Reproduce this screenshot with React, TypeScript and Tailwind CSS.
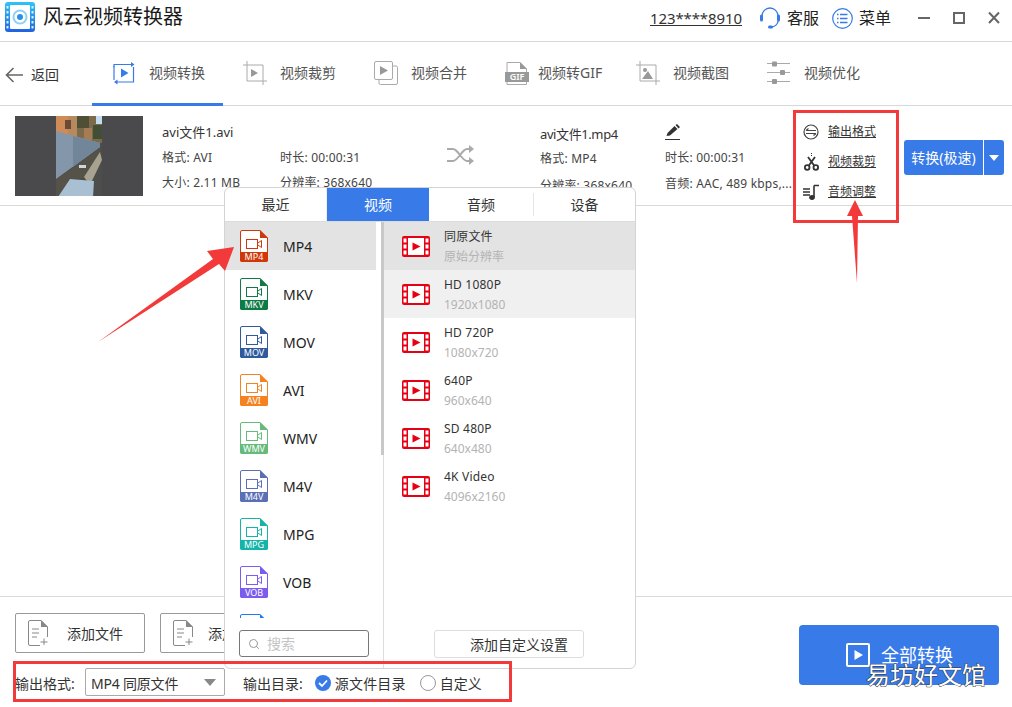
import type { ReactNode } from 'react';
import { Search } from 'lucide-react';

const BLUE = '#377ae8';

const formats = [
  { name: 'MP4', color: '#d0380a' },
  { name: 'MKV', color: '#0e7a45' },
  { name: 'MOV', color: '#2f5a9e' },
  { name: 'AVI', color: '#f58220' },
  { name: 'WMV', color: '#65bb7b' },
  { name: 'M4V', color: '#5a6fb5' },
  { name: 'MPG', color: '#14b5a8' },
  { name: 'VOB', color: '#7c5cf0' },
  { name: '', color: '#1d7cf2' },
];

const presets = [
  { title: '同原文件', sub: '原始分辨率', bg: 'bg-[#e3e3e3]' },
  { title: 'HD 1080P', sub: '1920x1080', bg: 'bg-[#f0f0f0]' },
  { title: 'HD 720P', sub: '1080x720', bg: '' },
  { title: '640P', sub: '960x640', bg: '' },
  { title: 'SD 480P', sub: '640x480', bg: '' },
  { title: '4K Video', sub: '4096x2160', bg: '' },
];

function FormatIcon({ name, color }: { name: string; color: string }) {
  return (
    <svg width="28" height="32" viewBox="0 0 28 32" className="shrink-0">
      <path d="M2 .5H20L27.5 8V30a1.5 1.5 0 0 1-1.5 1.5H2A1.5 1.5 0 0 1 .5 30V2A1.5 1.5 0 0 1 2 .5Z" fill="#fff" stroke={color} />
      <path d="M20 0L28 8H20Z" fill={color} />
      <path d="M0 22H28V30a2 2 0 0 1-2 2H2a2 2 0 0 1-2-2Z" fill={color} />
      <rect x="6.5" y="9.5" width="11" height="9" fill="none" stroke={color} />
      <path d="M18 13L21.5 10.5V17.5L18 15" fill="none" stroke={color} />
      <text x="14" y="30" textAnchor="middle" fontSize="9" fill="#fff" fontFamily="Noto Sans">{name}</text>
    </svg>
  );
}

function FilmIcon() {
  return (
    <svg width="28" height="21" viewBox="0 0 28 21" className="shrink-0">
      <rect width="28" height="21" rx="2" fill="#e60012" />
      <rect x="6" y="2" width="16" height="17" fill="#fff" />
      <path d="M10.5 6.5L18.5 10.5L10.5 14.5Z" fill="#e60012" />
      {[2.5, 8.5, 14.5].map((y) => (
        <g key={y} fill="#fff">
          <rect x="1.5" y={y} width="3" height="4" />
          <rect x="23.5" y={y} width="3" height="4" />
        </g>
      ))}
    </svg>
  );
}

function Logo() {
  return (
    <svg width="30" height="30" viewBox="0 0 30 30" className="shrink-0">
      <defs>
        <linearGradient id="logo" x1="0" y1="0" x2="0" y2="1">
          <stop offset="0" stopColor="#2fc4f5" />
          <stop offset="1" stopColor="#1f62e0" />
        </linearGradient>
      </defs>
      <rect width="30" height="30" rx="3" fill="url(#logo)" />
      <rect x="5" y="3" width="20" height="24" rx="1" fill="#fff" />
      {[4, 9, 14, 19, 24].map((y) => (
        <g key={y} fill="#d6f0fc">
          <rect x="1.5" y={y} width="2" height="2.5" />
          <rect x="26.5" y={y} width="2" height="2.5" />
        </g>
      ))}
      <circle cx="15" cy="15" r="7.5" fill="#8fd0f5" />
      <circle cx="15" cy="15" r="5.5" fill="#fff" />
      <circle cx="15" cy="15" r="3" fill="#2a8fe8" />
    </svg>
  );
}

function Thumbnail() {
  return (
    <svg width="128" height="80" viewBox="0 0 128 80" className="shrink-0">
      <defs>
        <clipPath id="frame">
          <rect x="41" width="46" height="80" />
        </clipPath>
        <filter id="soft">
          <feGaussianBlur stdDeviation="0.7" />
        </filter>
      </defs>
      <rect width="128" height="80" fill="#4a4a4c" />
      <g clipPath="url(#frame)">
        <g filter="url(#soft)">
          <rect x="40" y="-1" width="48" height="82" fill="#4f4e46" />
          <rect x="40" y="-1" width="48" height="28" fill="#7d6a4c" />
          <rect x="40" y="-1" width="13" height="20" fill="#d08c58" />
          <rect x="53" y="-1" width="9" height="22" fill="#b58a5e" />
          <rect x="50" y="4" width="6" height="9" fill="#6b4a36" />
          <rect x="62" y="-1" width="12" height="13" fill="#4f4f34" />
          <rect x="69" y="12" width="8" height="12" fill="#a57c56" />
          <rect x="81" y="-1" width="7" height="9" fill="#c3dcef" />
          <rect x="78" y="9" width="10" height="14" fill="#3f5034" />
          <path d="M41 15L85 27V31L41 63Z" fill="#8497aa" />
          <path d="M58 20L85 27V31L58 51Z" fill="#72869a" />
          <path d="M41 64L85 32V42L70 62L56 63L44 80H41Z" fill="#54524a" />
          <path d="M87 35V80H74L80 60Z" fill="#4e4d4b" />
          <path d="M69 61L85 36L87 44L75 69Z" fill="#a8a290" />
          <rect x="64" y="49" width="7" height="3" fill="#d2d6da" />
          <path d="M43 81L55 63L79 65L78 81Z" fill="#a9bfd2" />
        </g>
      </g>
    </svg>
  );
}

function NavIcon({ kind, active }: { kind: number; active?: boolean }) {
  const c = active ? BLUE : '#999';
  return (
    <svg width="24" height="24" viewBox="0 0 24 24" fill="none" stroke={c} strokeWidth="1" className="shrink-0">
      {kind === 0 && (
        <>
          <path d="M2 6V3.5H19M21.5 6V21H4" strokeWidth="1.2" />
          <path d="M2 5V19" strokeWidth="1.2" />
          <path d="M19 1L22.5 3.5L19 6Z M5.5 18.5L2 21L5.5 23.5Z" fill={c} stroke="none" />
          <path d="M9 7.5L16.5 12L9 16.5Z" fill={c} stroke="none" />
        </>
      )}
      {kind === 1 && (
        <>
          <path d="M0 4H20V20M4 0V20H24M20 20V24" stroke="#aaa" />
          <path d="M8 8L15 12L8 16Z" fill={c} stroke="none" />
        </>
      )}
      {kind === 2 && (
        <>
          <rect x=".5" y=".5" width="18" height="18" rx="1.5" stroke="#aaa" />
          <path d="M19 5H22a1.5 1.5 0 0 1 1.5 1.5V22a1.5 1.5 0 0 1-1.5 1.5H6.5A1.5 1.5 0 0 1 5 22V19" stroke="#aaa" />
          <path d="M6 5L14 9.5L6 14Z" fill={c} stroke="none" />
        </>
      )}
      {kind === 3 && (
        <>
          <path d="M2 12V1.5H15L21.5 8V12M2 20V23.5H21.5V20" stroke="#aaa" />
          <path d="M15 1V8H22Z" fill={c} stroke="none" />
        </>
      )}
      {kind === 4 && (
        <>
          <path d="M0 4H20V20M4 0V20H24M20 20V24" stroke="#aaa" />
          <circle cx="9" cy="9" r="2" fill={c} stroke="none" />
          <path d="M6 18L12 10L17 18Z" fill={c} stroke="none" />
        </>
      )}
      {kind === 5 && (
        <>
          <path d="M0 2.5H23M0 11.5H23M0 20.5H23" stroke="#aaa" />
          <rect x="5" y=".5" width="5" height="5" rx="1" fill={c} stroke="none" />
          <rect x="13" y="9" width="5" height="5" rx="1" fill={c} stroke="none" />
          <rect x="5" y="18" width="5" height="5" rx="1" fill={c} stroke="none" />
        </>
      )}
    </svg>
  );
}

function GifIcon() {
  return (
    <div className="relative w-6 h-6 shrink-0">
      <NavIcon kind={3} />
      <span className="absolute left-0 top-[11px] w-6 h-[10px] bg-[#999] text-white text-[9px] leading-[10px] text-center font-semibold">GIF</span>
    </div>
  );
}

function InfoLine({ children, className = '' }: { children: ReactNode; className?: string }) {
  return <div className={`text-[12px] leading-[18px] text-[#444] tracking-[0.2px] whitespace-nowrap ${className}`}>{children}</div>;
}

function ActionLink({ icon, label }: { icon: ReactNode; label: string }) {
  return (
    <div className="flex items-center h-[30px]">
      <span className="w-[16px] h-[18px] flex items-center justify-center shrink-0">{icon}</span>
      <span className="ml-[9px] text-[12px] underline text-[#333]">{label}</span>
    </div>
  );
}

const tabs = ['视频转换', '视频裁剪', '视频合并', '视频转GIF', '视频截图', '视频优化'];

export default function App() {
  return (
    <div className="relative w-[1012px] h-[707px] overflow-hidden bg-white text-[#333] flex flex-col font-['Noto_Sans','Noto_Sans_CJK_SC',sans-serif]">
      {/* title bar */}
      <header className="h-[42px] shrink-0 border-b border-[#d9d9d9] flex items-start pl-[5px] pt-[2px]">
        <Logo />
        <span className="ml-[8px] text-[20px] leading-[30px] text-[#1a1a1a]">风云视频转换器</span>
        <div className="ml-auto flex items-center h-[30px] mt-[1px]">
          <span className="text-[15px] underline text-[#333] tracking-[-0.1px]">123****8910</span>
          <svg width="20" height="22" viewBox="0 0 20 22" fill="none" className="ml-[18px]">
            <path d="M2 11V9a8 8 0 0 1 16 0v2" stroke={BLUE} strokeWidth="1.3" />
            <rect y="7.5" width="3" height="7" rx="1.5" fill={BLUE} />
            <rect x="17" y="7.5" width="3" height="7" rx="1.5" fill={BLUE} />
            <path d="M18 14c0 3-3 6-7 6" stroke={BLUE} strokeWidth="1.3" />
            <rect x="8" y="18.5" width="5" height="3" rx="1.5" fill={BLUE} />
          </svg>
          <span className="ml-[7px] text-[16px] text-[#222]">客服</span>
          <svg width="21" height="21" viewBox="0 0 21 21" fill="none" className="ml-[13px]">
            <circle cx="10.5" cy="10.5" r="9.8" stroke={BLUE} strokeWidth="1.2" />
            <path d="M8 6.5H15.5M8 10.5H15.5M8 14.5H15.5M5 6.5H6.5M5 10.5H6.5M5 14.5H6.5" stroke={BLUE} strokeWidth="1.5" />
          </svg>
          <span className="ml-[6px] text-[16px] text-[#222]">菜单</span>
          <svg width="82" height="14" viewBox="0 0 82 14" fill="none" stroke="#666" strokeWidth="2" className="ml-[27px] mr-[12px]">
            <path d="M0 7H12" />
            <rect x="36" y="2" width="10" height="10" />
            <path d="M71 1.5L81 12M81 1.5L71 12" />
          </svg>
        </div>
      </header>

      {/* nav */}
      <nav className="h-[64px] shrink-0 border-b border-[#d9d9d9] flex">
        <div className="w-[92px] flex items-center pl-[5px] pt-[2px]">
          <svg width="18" height="16" viewBox="0 0 18 16" fill="none" stroke="#666" strokeWidth="1.6">
            <path d="M8.5 1L1.5 8L8.5 15M1.5 8H18" />
          </svg>
          <span className="ml-[8px] text-[14px] text-[#333]">返回</span>
        </div>
        {tabs.map((label, i) => (
          <div
            key={label}
            className={`w-[131px] flex items-center pl-[20px] border-b-[3px] mb-[-1px] ${i === 0 ? 'border-[#377ae8]' : 'border-transparent'}`}
          >
            {i === 3 ? <GifIcon /> : <NavIcon kind={i} active={i === 0} />}
            <span className={`text-[14px] text-[#555] whitespace-nowrap ${i === 3 ? 'ml-[9px]' : 'ml-[13px]'}`}>{label}</span>
          </div>
        ))}
      </nav>

      {/* file row */}
      <section className="h-[100px] shrink-0 border-b border-[#d9d9d9] flex items-center pl-[15px]">
        <Thumbnail />
        <div className="ml-[19px] w-[118px] pt-[4px]">
          <div className="text-[13px] leading-[18px] text-[#333] mb-[8px]">avi文件1.avi</div>
          <InfoLine className="mb-[7px]">格式: AVI</InfoLine>
          <InfoLine>大小: 2.11 MB</InfoLine>
        </div>
        <div className="w-[167px] pt-[30px]">
          <InfoLine className="mb-[7px]">时长: 00:00:31</InfoLine>
          <InfoLine>分辨率: 368x640</InfoLine>
        </div>
        <svg width="28" height="20" viewBox="0 0 28 20" fill="none" stroke="#aaa" strokeWidth="2" className="mr-[65px] mt-[-2px]">
          <path d="M0 4H6C11 4 15 16 20 16H25M0 16H6C11 16 15 4 20 4H25" />
          <path d="M22 0L27 4L22 8ZM22 12L27 16L22 20Z" fill="#aaa" stroke="none" />
        </svg>
        <div className="w-[125px] pt-[9px]">
          <div className="text-[13px] leading-[18px] text-[#333] tracking-[-0.4px] mb-[7px]">avi文件1.mp4</div>
          <InfoLine className="mb-[9px]">格式: MP4</InfoLine>
          <InfoLine>分辨率: 368x640</InfoLine>
        </div>
        <div className="w-[138px] pt-[5px]">
          <svg width="16" height="16" viewBox="0 0 16 16" className="mb-[9px]">
            <path d="M1.5 12L2.5 9L9.5 2L12.5 5L5 11.5Z M10.5 1L12 0L15 3L13.5 4.5Z" fill="#333" />
            <path d="M0 15.5H15" stroke="#333" />
          </svg>
          <InfoLine className="mb-[8px]">时长: 00:00:31</InfoLine>
          <InfoLine>音频: AAC, 489 kbps,...</InfoLine>
        </div>
        <div className="pt-[12px]">
          <ActionLink
            label="输出格式"
            icon={
              <svg width="16" height="16" viewBox="0 0 16 16" fill="none" stroke="#444" strokeWidth="1.2">
                <circle cx="8" cy="8" r="7" />
                <path d="M3 6.5H13M5.5 4.5L3 6.5M3 9.5H13M10.5 11.5L13 9.5" />
              </svg>
            }
          />
          <ActionLink
            label="视频裁剪"
            icon={
              <svg width="15" height="18" viewBox="0 0 15 18" fill="none" stroke="#333" strokeWidth="1.8">
                <path d="M7.5 0V4" strokeWidth="1" strokeDasharray="1 1" />
                <path d="M4 4L10.5 13M11 4L4.5 13" />
                <circle cx="3.2" cy="14.5" r="2.3" />
                <circle cx="11.8" cy="14.5" r="2.3" />
              </svg>
            }
          />
          <ActionLink
            label="音频调整"
            icon={
              <svg width="16" height="16" viewBox="0 0 16 16" fill="none" stroke="#333">
                <path d="M0 5H7M0 8H7M0 11H7" strokeWidth="1.3" />
                <path d="M11 1.5V13M11 1.5H16" strokeWidth="1.6" />
                <ellipse cx="9" cy="13.5" rx="2.5" ry="2" fill="#333" />
              </svg>
            }
          />
        </div>
        <div className="ml-[28px] flex h-[35px] text-white mt-[4px]">
          <div className="w-[79px] rounded-l-[3px] bg-[#377ae8] text-[14px] flex items-center justify-center whitespace-nowrap">转换(极速)</div>
          <div className="ml-[1px] w-[20px] rounded-r-[3px] bg-[#377ae8] flex items-center justify-center">
            <span className="border-x-[5px] border-t-[6px] border-x-transparent border-t-white" />
          </div>
        </div>
      </section>

      <main className="flex-1" />

      {/* bottom bar */}
      <footer className="h-[111px] shrink-0 border-t border-[#d9d9d9] relative">
        <div className="flex pl-[15px] pt-[16px] gap-[15px]">
          {['添加文件', '添加文件夹'].map((label, i) => (
            <div key={label} className="w-[130px] h-[40px] border border-[#999] rounded-[2px] flex items-center pl-[12px] shrink-0">
              <svg width="20" height="26" viewBox="0 0 20 26" fill="none" stroke="#888">
                <path d="M12 25.5H2a1.5 1.5 0 0 1-1.5-1.5V2A1.5 1.5 0 0 1 2 .5H13L19.5 7V17" />
                <path d="M13 0V7H20Z" fill="#888" stroke="none" />
                <path d="M4 9H11M4 13H11M4 17H9M16 18.5V25M12.5 22H19.5" />
              </svg>
              <span className={`text-[14px] text-[#333] whitespace-nowrap ${i === 0 ? 'ml-[19px]' : 'ml-[15px]'}`}>{label}</span>
            </div>
          ))}
        </div>
        <div className="flex items-center pl-[15px] mt-[15px] h-[28px] text-[#333]">
          <span className="text-[14px] w-[70px] whitespace-nowrap pt-[2px]">输出格式:</span>
          <div className="w-[140px] h-[28px] border border-[#aaa] rounded-[2px] flex items-center justify-between pl-[5px] pr-[8px] text-[14px]">
            <span className="whitespace-nowrap tracking-[-0.2px] pt-[2px]">MP4 同原文件</span>
            <span className="border-x-[6px] border-t-[7px] border-x-transparent border-t-[#888]" />
          </div>
          <span className="ml-[18px] text-[14px] whitespace-nowrap pt-[2px]">输出目录:</span>
          <svg width="16" height="16" viewBox="0 0 16 16" className="ml-[12px] mt-[2px] shrink-0">
            <circle cx="8" cy="8" r="8" fill={BLUE} />
            <path d="M4 8L7 11L12 5.5" fill="none" stroke="#fff" strokeWidth="1.8" />
          </svg>
          <span className="ml-[4px] text-[14px] tracking-[0.2px] whitespace-nowrap pt-[2px]">源文件目录</span>
          <span className="ml-[14px] mt-[2px] w-[16px] h-[16px] rounded-full border border-[#999] shrink-0" />
          <span className="ml-[4px] text-[14px] whitespace-nowrap pt-[2px]">自定义</span>
        </div>
        <button className="absolute left-[799px] top-[28px] w-[200px] h-[60px] rounded-[4px] bg-[#377ae8] text-white flex items-center pl-[47px]">
          <svg width="24" height="24" viewBox="0 0 24 24" fill="none">
            <rect x="1" y="1" width="22" height="22" rx="1" stroke="#fff" strokeWidth="2" />
            <path d="M8.5 7L17 12L8.5 17Z" fill="#fff" />
          </svg>
          <span className="ml-[11px] text-[18px]">全部转换</span>
        </button>
      </footer>

      {/* format popover */}
      <div className="absolute left-[224px] top-[187px] w-[412px] h-[482px] bg-white border border-[#d4d4d4] rounded-[6px] flex flex-col overflow-hidden">
        <div className="h-[34px] shrink-0 flex border-b border-[#dcdcdc] text-[14px] text-[#333]">
          <div className="w-[102px] flex items-center justify-center border-r border-[#eee]">最近</div>
          <div className="w-[102px] flex items-center justify-center bg-[#377ae8] text-white mt-[-1px]">视频</div>
          <div className="w-[105px] flex items-center justify-center my-[5px] border-r border-[#e5e5e5]">音频</div>
          <div className="flex-1 flex items-center justify-center">设备</div>
        </div>
        <div className="flex-1 flex min-h-0">
          <div className="w-[159px] shrink-0 border-r border-[#ddd] flex flex-col relative">
            <div className="h-[396px] overflow-hidden">
              {formats.map((f, i) => (
                <div key={i} className={`h-[48px] w-[151px] flex items-center pl-[15px] ${i === 0 ? 'bg-[#e3e3e3]' : ''}`}>
                  <FormatIcon name={f.name} color={f.color} />
                  <span className="ml-[15px] text-[14px] text-[#222]">{f.name}</span>
                </div>
              ))}
            </div>
            <div className="absolute right-[-1px] top-0 w-[3px] h-[233px] bg-[#c8c8c8]" />
            <div className="mt-[12px] ml-[14px] w-[130px] h-[27px] border border-[#777] rounded-[3px] flex items-center pl-[8px]">
              <Search size={12} color="#999" />
              <span className="ml-[7px] text-[14px] text-[#c4c4c4]">搜索</span>
            </div>
          </div>
          <div className="flex-1 flex flex-col">
            {presets.map((p) => (
              <div key={p.title} className={`h-[48px] flex items-center pl-[18px] ${p.bg}`}>
                <FilmIcon />
                <div className="ml-[14px] pt-[2px]">
                  <div className="text-[12px] leading-[20px] text-[#333] tracking-[0.2px]">{p.title}</div>
                  <div className="text-[12px] leading-[20px] text-[#b3b3b3]">{p.sub}</div>
                </div>
              </div>
            ))}
            <div className="mt-auto mb-[10px] ml-[50px] w-[150px] h-[28px] border border-[#ddd] rounded-[3px] flex items-center justify-end pr-[15px] text-[14px] text-[#333] whitespace-nowrap">
              添加自定义设置
            </div>
          </div>
        </div>
      </div>

      {/* red annotations */}
      <div className="absolute left-[793px] top-[110px] w-[106px] h-[113px] border-[3px] border-[#f33a3a]" />
      <div className="absolute left-[13px] top-[661px] w-[499px] h-[41px] border-[3px] border-[#f33a3a]" />
      <svg width="1012" height="707" viewBox="0 0 1012 707" className="absolute left-0 top-0 pointer-events-none">
        <path d="M855 200L863 216H858L857 283L852 216H847Z" fill="#f33a3a" />
        <path d="M234 247L207 251L213 259L98 342L219 264L225 271Z" fill="#f33a3a" />
      </svg>

      {/* watermark */}
      <span className="absolute left-[866px] top-[658px] text-[24px] leading-[34px] text-white [-webkit-text-stroke:1px_#333] [paint-order:stroke_fill] whitespace-nowrap">
        易坊好文馆
      </span>
    </div>
  );
}
